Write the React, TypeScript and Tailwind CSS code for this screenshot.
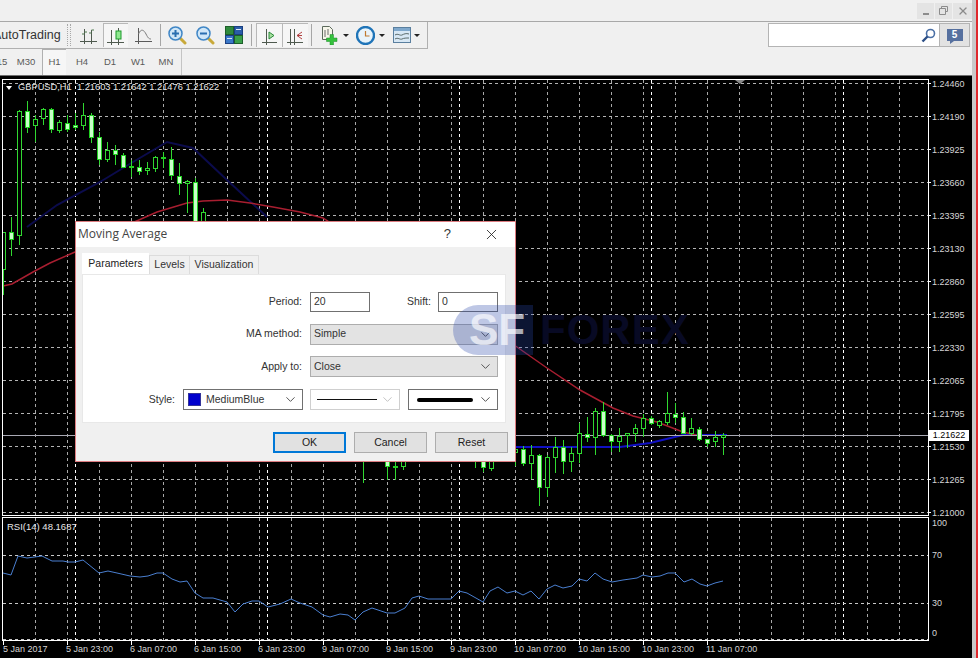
import { ChevronDown, X } from 'lucide-react'
import type { ReactNode } from 'react'

type Candle = [number, number, number, number, number, boolean]

// x, high, low, body top, body bottom, filled
const candles: Candle[] = [
  [3, 232, 295, 232, 269, false],
  [11, 217, 256, 232, 239, true],
  [19, 110, 245, 111, 235, false],
  [27, 101, 133, 111, 127, true],
  [35, 115, 142, 119, 125, false],
  [43, 108, 125, 109, 118, false],
  [51, 108, 133, 109, 129, true],
  [59, 120, 133, 122, 130, false],
  [67, 115, 132, 123, 129, true],
  [75, 113, 130, 125, 127, true],
  [83, 103, 130, 115, 125, false],
  [91, 113, 143, 115, 137, true],
  [99, 132, 165, 137, 159, true],
  [107, 142, 162, 150, 159, false],
  [115, 145, 165, 150, 154, true],
  [123, 153, 168, 155, 167, true],
  [131, 160, 177, 166, 167, true],
  [139, 160, 175, 167, 171, true],
  [147, 162, 175, 168, 170, false],
  [155, 156, 172, 157, 168, false],
  [163, 152, 168, 157, 158, true],
  [171, 147, 180, 159, 175, true],
  [179, 163, 195, 176, 183, true],
  [187, 180, 213, 181, 183, false],
  [195, 178, 224, 182, 224, true],
  [203, 208, 224, 212, 224, false],
  [363, 455, 483, 455, 458, false],
  [387, 455, 480, 458, 466, true],
  [395, 455, 480, 466, 467, true],
  [403, 455, 470, 458, 466, false],
  [475, 455, 468, 458, 460, false],
  [483, 455, 472, 458, 467, true],
  [491, 455, 471, 458, 468, false],
  [515, 446, 466, 449, 452, false],
  [523, 446, 466, 449, 463, true],
  [531, 445, 479, 455, 463, false],
  [539, 454, 506, 455, 487, true],
  [547, 455, 497, 457, 487, false],
  [555, 437, 473, 447, 457, false],
  [563, 440, 474, 447, 461, true],
  [571, 447, 472, 453, 461, false],
  [579, 423, 463, 433, 453, false],
  [587, 417, 442, 434, 437, true],
  [595, 408, 455, 411, 437, false],
  [603, 402, 437, 411, 435, true],
  [611, 434, 452, 435, 441, true],
  [619, 428, 452, 436, 441, false],
  [627, 433, 448, 433, 435, false],
  [635, 424, 442, 428, 433, false],
  [643, 414, 437, 418, 428, false],
  [651, 416, 425, 418, 423, true],
  [659, 420, 428, 421, 425, false],
  [667, 392, 425, 413, 422, false],
  [675, 403, 423, 414, 417, true],
  [683, 412, 434, 417, 433, true],
  [691, 418, 435, 428, 433, false],
  [699, 427, 441, 429, 439, true],
  [707, 439, 447, 439, 443, true],
  [715, 431, 447, 437, 441, false],
  [723, 433, 455, 435, 437, false],
]

const redLine =
  '3,286 12,284 33,272 50,263 75,252 132,223 157,212 187,203 203,201 227,200 250,203 273,207 300,212 323,218 517,347 547,368 580,390 613,408 633,416 657,422 683,432 700,436'
const blueDim = '27,227 57,205 100,182 133,162 167,142 193,148 227,180 267,217'
const blueBright = '515,447 567,447 620,447 650,443 683,435 727,435'
const rsiLine =
  '3,573 11,575 18,556 27,558 42,556 52,561 63,561 68,562 75,562 83,560 99,573 108,571 117,573 130,576 140,577 148,576 157,573 163,573 172,579 180,582 187,581 195,593 203,598 213,598 227,602 235,612 243,604 252,601 259,601 268,607 280,604 291,599 300,603 312,607 323,615 330,617 340,614 348,615 355,620 363,612 372,608 387,613 395,613 405,608 412,598 419,596 428,599 451,599 459,591 467,593 483,602 490,591 498,587 507,593 515,591 523,595 531,591 539,599 547,589 555,585 563,588 572,586 579,579 587,581 595,573 603,579 612,582 623,580 637,578 643,575 652,577 660,576 668,573 675,573 684,582 692,579 700,584 707,586 715,583 723,581'

const gridX = Array.from({ length: 28 }, (_, i) => 35 + i * 32)
const sepX = [75, 267, 459, 651, 843]
const priceY = Array.from({ length: 14 }, (_, i) => 83 + i * 33)
const prices = ['1.24460', '1.24190', '1.23925', '1.23660', '1.23395', '1.23130', '1.22860', '1.22595', '1.22330', '1.22065', '1.21795', '1.21530', '1.21265', '1.21000']
const dates = ['5 Jan 2017', '5 Jan 23:00', '6 Jan 07:00', '6 Jan 15:00', '6 Jan 23:00', '9 Jan 07:00', '9 Jan 15:00', '9 Jan 23:00', '10 Jan 07:00', '10 Jan 15:00', '10 Jan 23:00', '11 Jan 07:00']

const VGrid = ({ y1, y2 }: { y1: number; y2: number }) => (
  <>
    {gridX.map((x) => (
      <line key={x} x1={x + 0.5} x2={x + 0.5} y1={y1} y2={y2} stroke="#a8a8a8" strokeDasharray="3 3" />
    ))}
    {sepX.map((x) => (
      <line key={x} x1={x + 0.5} x2={x + 0.5} y1={y1} y2={y2} stroke="#ffffff" strokeDasharray="3 3" />
    ))}
  </>
)

const MainChart = () => (
  <svg width={930} height={437} viewBox="2 79 930 437" className="block shrink-0">
    <VGrid y1={80} y2={515} />
    {priceY.map((y) => (
      <g key={y}>
        <line x1={3} x2={928} y1={y + 0.5} y2={y + 0.5} stroke="#b4b4b4" strokeDasharray="3 3" />
        <line x1={928} x2={931} y1={y + 0.5} y2={y + 0.5} stroke="#ffffff" />
      </g>
    ))}
    <polyline points={blueDim} fill="none" stroke="#0b0b4c" strokeWidth={2} />
    <polyline points={blueBright} fill="none" stroke="#1010c4" strokeWidth={2} />
    <polyline points={redLine} fill="none" stroke="#a81e30" strokeWidth={1.5} />
    <line x1={3} x2={928} y1={435.5} y2={435.5} stroke="#a9a9b4" />
    {candles.map(([x, high, low, top, bottom, filled]) => (
      <g key={x}>
        <line x1={x + 0.5} x2={x + 0.5} y1={high} y2={low} stroke="#30d830" />
        <rect
          x={x - 1.5}
          y={top + 0.5}
          width={4}
          height={bottom - top}
          fill={filled ? '#c8ffc8' : '#000000'}
          stroke={filled ? '#20d020' : '#30d830'}
        />
      </g>
    ))}
    <path d="M735 80h10l-5 4z" fill="#8a8a8a" />
    <rect x={2.5} y={79.5} width={926} height={436} fill="none" stroke="#ffffff" />
  </svg>
)

const RsiChart = () => (
  <svg width={930} height={128} viewBox="2 517 930 128" className="block shrink-0">
    <VGrid y1={518} y2={640} />
    {[555, 603, 639].map((y) => (
      <line key={y} x1={3} x2={928} y1={y + 0.5} y2={y + 0.5} stroke="#c8c8c8" strokeDasharray="3 3" />
    ))}
    <polyline points={rsiLine} fill="none" stroke="#4a7fd0" />
    <rect x={2.5} y={517.5} width={926} height={123} fill="none" stroke="#ffffff" />
    {Array.from({ length: 12 }, (_, i) => 3 + i * 64).map((x) => (
      <line key={x} x1={x + 0.5} x2={x + 0.5} y1={641} y2={645} stroke="#ffffff" />
    ))}
  </svg>
)

const Axes = () => (
  <>
    <path d="M0 15.5H17M4.5 3V18M11.5 4V18" stroke="#4f5a4f" strokeWidth={1} fill="none" />
  </>
)

const IconBars = () => (
  <svg width={18} height={18} viewBox="0 0 18 18">
    <Axes />
    <path d="M2 8h2.5M4.5 6H7M9 7h2.5M11.5 4H14" stroke="#4d7a4d" fill="none" />
  </svg>
)

const IconCandle = () => (
  <svg width={18} height={18} viewBox="0 0 18 18">
    <path d="M0 15.5H17M4.5 3V18M11.5 1V18" stroke="#4f5a4f" fill="none" />
    <rect x={9} y={4} width={5} height={8} fill="#8fe88f" stroke="#1a9a2a" />
  </svg>
)

const IconLine = () => (
  <svg width={18} height={18} viewBox="0 0 18 18">
    <path d="M0 15.5H17M3.5 2V18" stroke="#5a5a5a" fill="none" />
    <path d="M3.5 8C6 2 9 4 11 8s3 5 5 5" stroke="#7a7a7a" fill="none" />
  </svg>
)

const IconZoom = ({ plus }: { plus?: boolean }) => (
  <svg width={19} height={19} viewBox="0 0 19 19">
    <path d="M11.5 11.5l5.5 5.5" stroke="#c8a93a" strokeWidth={3} strokeLinecap="round" />
    <circle cx={7.5} cy={7.5} r={6.5} fill="#cfe6f7" stroke="#3f86c6" strokeWidth={1.5} />
    <path d={plus ? 'M4 7.5h7M7.5 4v7' : 'M4 7.5h7'} stroke="#2a6fb0" strokeWidth={2} />
  </svg>
)

const IconTile = () => (
  <svg width={18} height={18} viewBox="0 0 18 18">
    <rect x={0.5} y={0.5} width={8} height={8} fill="#2f8a3c" stroke="#1d5f2a" />
    <rect x={9.5} y={0.5} width={8} height={8} fill="#2a5da8" stroke="#1a3f80" />
    <rect x={0.5} y={9.5} width={8} height={8} fill="#3a78c8" stroke="#1a3f80" />
    <rect x={9.5} y={9.5} width={8} height={8} fill="#3aa04a" stroke="#1d5f2a" />
    <path d="M11 3.5h5M2 12.5h5" stroke="#dfe8f5" />
  </svg>
)

const IconShift = () => (
  <svg width={18} height={18} viewBox="0 0 18 18">
    <path d="M1 15.5H16M5.5 2V18" stroke="#4f5a4f" fill="none" />
    <path d="M8 5l5 3.5L8 12z" fill="#a8e0a0" stroke="#2a8a3a" />
  </svg>
)

const IconAutoScroll = () => (
  <svg width={18} height={18} viewBox="0 0 18 18">
    <path d="M0 15.5H16M3.5 2V18M7.5 2V18" stroke="#4f5a4f" fill="none" />
    <path d="M15 5l-5 3.5 5 3.5M10 8.5h5" stroke="#b04040" fill="none" />
  </svg>
)

const IconNewChart = () => (
  <svg width={20} height={20} viewBox="0 0 20 20">
    <path d="M2.5 1.5h7l3 3v10h-10z" fill="#f6f6ea" stroke="#5c6a5c" />
    <path d="M5 5v7M8 4v6" stroke="#6a6a6a" />
    <path d="M10 9.5h3.5v3.5H17V16.5h-3.5V20H10v-3.5H6.5V13H10z" fill="#34c23c" stroke="#1d8a28" strokeWidth={0.5} />
  </svg>
)

const IconClock = () => (
  <svg width={19} height={19} viewBox="0 0 19 19">
    <circle cx={9.5} cy={9.5} r={8.5} fill="#e8f4fb" stroke="#1f74b8" strokeWidth={2.4} />
    <path d="M9.5 5v5h4" stroke="#c07a30" fill="none" strokeWidth={1.2} />
  </svg>
)

const IconTemplate = () => (
  <svg width={18} height={16} viewBox="0 0 18 16">
    <rect x={0.5} y={0.5} width={17} height={15} fill="#d7e7f4" stroke="#5a7f9f" />
    <rect x={1} y={1} width={16} height={3} fill="#7fa8cc" />
    <path d="M2 8c3-2 5 1 7 0s4-2 7-1M2 12c3-2 5 1 7 0s4-1 7-1" stroke="#5a6a6a" fill="none" />
  </svg>
)

const Caret = () => <span className="w-0 h-0 border-x-[3px] border-x-transparent border-t-[3px] border-t-[#222222]" />

const Sep = ({ className }: { className?: string }) => <div className={`w-px h-[22px] bg-[#a6a6a6] shrink-0 ${className ?? ''}`} />

const Tool = ({ w, pressed, children }: { w: string; pressed?: boolean; children: ReactNode }) => (
  <div
    className={`${w} h-[24px] shrink-0 flex items-center justify-center ${
      pressed ? 'border-t border-l border-[#b8b8b8] bg-[#f6f6f6]' : ''
    }`}
  >
    {children}
  </div>
)

const Select = ({ w, disabled, gray, children }: { w: string; disabled?: boolean; gray?: boolean; children: ReactNode }) => (
  <div
    className={`${w} h-[21px] shrink-0 flex items-center pr-[4px] border ${
      gray ? 'bg-[#e3e3e3] border-[#adadad]' : disabled ? 'bg-white border-[#cfcfcf]' : 'bg-white border-[#707070]'
    }`}
  >
    <div className="flex-1 min-w-0 flex items-center">{children}</div>
    <ChevronDown size={15} strokeWidth={1.6} className={disabled ? 'text-[#c4c4c4]' : 'text-[#555555]'} />
  </div>
)

const Button = ({ w, primary, children }: { w: string; primary?: boolean; children: ReactNode }) => (
  <div
    className={`${w} h-[21px] flex items-center justify-center text-[#222222] bg-[#e1e1e1] ${
      primary ? 'border-2 border-[#0078d7]' : 'border border-[#adadad]'
    }`}
  >
    {children}
  </div>
)

const Dialog = () => (
  <div className="absolute left-[75px] top-[221px] w-[441px] h-[241px] border border-[#dd7c80] bg-[#f0f0f0] flex flex-col font-['Liberation_Sans',sans-serif] text-[10.5px] text-[#333333]">
    <div className="h-[25px] bg-white flex items-center pl-[2px] pb-px shrink-0">
      <span className="font-['Open_Sans',sans-serif] text-[12px] text-[#444444] flex-1">Moving Average</span>
      <span className="text-[13px] text-[#333333] mr-[32px]">?</span>
      <X size={17} strokeWidth={1.2} className="mr-[15px] text-[#222222]" />
    </div>
    <div className="flex items-end h-[27px] pl-[6px] shrink-0">
      <div className="w-[67px] h-[21px] bg-white flex items-center justify-center text-[#222222]">Parameters</div>
      <div className="w-[41px] h-[19px] bg-[#f0f0f0] border border-b-0 border-[#dcdcdc] flex items-center justify-center">Levels</div>
      <div className="w-[69px] h-[19px] bg-[#f0f0f0] border border-b-0 border-l-0 border-[#dcdcdc] flex items-center justify-center">Visualization</div>
    </div>
    <div className="ml-[6px] w-[424px] h-[149px] bg-white border border-[#e8e8e8] pt-[16px] pr-[7px] flex flex-col gap-[11.7px] shrink-0">
      <div className="flex items-center justify-end h-[21px]">
        <span className="mr-[8px]">Period:</span>
        <div className="w-[60px] h-[20px] border border-[#707070] px-[3px] flex items-center">20</div>
        <span className="w-[31px] ml-[37px] shrink-0">Shift:</span>
        <div className="w-[60px] h-[20px] border border-[#707070] px-[3px] flex items-center">0</div>
      </div>
      <div className="flex items-center justify-end h-[21px]">
        <span className="mr-[8px]">MA method:</span>
        <Select w="w-[188px]" gray>
          <span className="pl-[3px]">Simple</span>
        </Select>
      </div>
      <div className="flex items-center justify-end h-[21px]">
        <span className="mr-[8px]">Apply to:</span>
        <Select w="w-[188px]" gray>
          <span className="pl-[3px]">Close</span>
        </Select>
      </div>
      <div className="flex items-center justify-end h-[21px]">
        <span className="mr-[8px]">Style:</span>
        <Select w="w-[120px]">
          <span className="w-[13px] h-[13px] bg-[#0000cd] ml-[4px] mr-[5px] border border-[#333399]" />
          <span>MediumBlue</span>
        </Select>
        <div className="ml-[7px]">
          <Select w="w-[90px]" disabled>
            <span className="ml-[6px] w-[60px] h-px bg-[#111111]" />
          </Select>
        </div>
        <div className="ml-[8px]">
          <Select w="w-[90px]">
            <span className="ml-[8px] w-[56px] h-[4px] rounded-full bg-black" />
          </Select>
        </div>
      </div>
    </div>
    <div className="flex justify-end gap-[8px] pt-[9px] pr-[7px]">
      <Button w="w-[73px]" primary>OK</Button>
      <Button w="w-[73px]">Cancel</Button>
      <Button w="w-[73px]">Reset</Button>
    </div>
  </div>
)

const App = () => {
  return (
    <div className="relative w-[978px] h-[658px] overflow-hidden flex bg-[#f0f0f0] font-['Liberation_Sans',sans-serif]">
      <div className="w-[972px] shrink-0 flex flex-col">
        {/* window buttons */}
        <div className="h-[22px] shrink-0 border-b border-[#a8a8a8] flex items-center justify-end">
          <div className="w-[17px] h-[16px] bg-[#e4e4e4] flex items-end justify-center pb-[4px] mr-px">
            <span className="w-[6px] h-[2px] bg-[#8c8c8c]" />
          </div>
          <div className="w-[17px] h-[16px] bg-[#e4e4e4] flex items-center justify-center mr-px">
            <svg width={9} height={9} viewBox="0 0 9 9">
              <path d="M2.5 2.5V.5h6v5h-2M.5 2.5h6v6h-6z" fill="none" stroke="#8c8c8c" />
            </svg>
          </div>
          <div className="w-[19px] h-[16px] bg-[#e4e4e4] flex items-center justify-center">
            <X size={12} strokeWidth={2.6} className="text-[#8c8c8c]" />
          </div>
        </div>

        {/* main toolbar */}
        <div className="h-[27px] shrink-0 flex items-start">
          <div className="w-[428px] h-[27px] shrink-0 border-r border-b border-[#b0b0b0] flex items-center overflow-hidden">
            <span className="w-[73px] -ml-[7px] shrink-0 text-[12.5px] text-[#333333]">AutoTrading</span>
            <div className="w-[4px] h-[22px] ml-px shrink-0 border-x border-dotted border-[#a8a8a8]" />
            <div className="w-[5px] shrink-0" />
            <Tool w="w-[26px]"><IconBars /></Tool>
            <div className="w-px shrink-0" />
            <Tool w="w-[25px]" pressed><IconCandle /></Tool>
            <Tool w="w-[32px]"><IconLine /></Tool>
            <Sep />
            <Tool w="w-[33px]"><IconZoom plus /></Tool>
            <Tool w="w-[22px]"><IconZoom /></Tool>
            <Tool w="w-[35px]"><IconTile /></Tool>
            <Sep className="mr-[4px]" />
            <Tool w="w-[26px]" pressed><IconShift /></Tool>
            <Tool w="w-[26px]" pressed><IconAutoScroll /></Tool>
            <Sep className="ml-[3px]" />
            <div className="w-[37px] pl-[8px] shrink-0 flex items-center gap-[3px]"><IconNewChart /><Caret /></div>
            <div className="w-[37px] pl-[7px] shrink-0 flex items-center gap-[4px]"><IconClock /><Caret /></div>
            <div className="w-[37px] pl-[7px] shrink-0 flex items-center gap-[3px]"><IconTemplate /><Caret /></div>
          </div>
          <div className="flex-1" />
          <div className="w-[172px] h-[24px] mt-px bg-white border border-[#b4b4b4] flex items-center justify-end pr-[3px]">
            <svg width={15} height={15} viewBox="0 0 15 15">
              <circle cx={9.5} cy={5.5} r={4} fill="none" stroke="#4a6fa5" strokeWidth={1.6} />
              <path d="M6.5 8.5L1.5 13.5" stroke="#2c4f86" strokeWidth={2.4} />
            </svg>
          </div>
          <div className="w-[30px] h-[24px] mt-px mr-[2px] bg-[#e2e2e2] border border-l-0 border-[#b4b4b4] flex items-center justify-center">
            <div className="relative w-[16px] h-[12px] bg-[#56709f] flex items-center justify-center text-[10px] font-bold leading-none text-white">
              5
              <span className="absolute -bottom-[3px] left-[3px] w-0 h-0 border-r-[4px] border-r-transparent border-t-[3px] border-t-[#56709f]" />
            </div>
          </div>
        </div>

        {/* timeframes */}
        <div className="h-[26px] shrink-0 flex items-center text-[9.5px] text-[#5a5a5a]">
          <div className="w-[182px] h-full border-r border-[#c4c4c4] flex items-center overflow-hidden">
            <span className="-ml-[16px] w-[28px] text-center shrink-0">M15</span>
            {['M30', 'H1', 'H4', 'D1', 'W1', 'MN'].map((t) => (
              <span
                key={t}
                className={`h-full flex items-center justify-center shrink-0 ${
                  t === 'H1' ? 'w-[24px] mx-[2px] border-t border-l border-[#b0b0b0] bg-[#f6f6f6]' : 'w-[28px]'
                }`}
              >
                {t}
              </span>
            ))}
          </div>
        </div>

        {/* charts */}
        <div className="flex-1 min-h-0 bg-black border-t border-[#6e6e6e] pt-[3px] pl-[2px] flex flex-col text-[9px] text-[#d6d6d6] leading-none">
          <div className="flex shrink-0 h-[437px]">
            <MainChart />
            <div className="relative flex-1 flex flex-col gap-[22px]">
              {prices.map((p) => (
                <span key={p} className="h-[11px] shrink-0 flex items-center">{p}</span>
              ))}
              <span className="absolute left-[-3px] top-[351px] w-[40px] h-[11px] bg-white text-black flex items-center justify-center">1.21622</span>
            </div>
          </div>
          <div className="flex shrink-0 mt-px">
            <RsiChart />
            <div className="flex-1 flex flex-col pt-px">
              <span className="h-[11px] flex items-center">100</span>
              <span className="h-[11px] flex items-center mt-[21px]">70</span>
              <span className="h-[11px] flex items-center mt-[37px]">30</span>
              <span className="h-[11px] flex items-center mt-[19px]">0</span>
            </div>
          </div>
          <div className="flex ml-px -mt-px">
            {dates.map((d, i) => (
              <span key={d} className={`${i === 0 ? 'w-[63px]' : 'w-[64px]'} shrink-0 whitespace-nowrap h-[11px] flex items-center`}>{d}</span>
            ))}
          </div>
        </div>
      </div>

      <div className="w-[4px] shrink-0 bg-[#c9c9c9]" />
      <div className="w-[2px] shrink-0 bg-[#e0282c]" />

      {/* chart legends */}
      <div className="absolute left-[6px] top-[82px] flex items-center gap-[6px] text-[9.3px] leading-[11px] text-[#e8e8e8]">
        <span className="w-0 h-0 border-x-[3.5px] border-x-transparent border-t-[4px] border-t-white" />
        <span className="whitespace-pre">GBPUSD,H1  1.21603 1.21642 1.21476 1.21622</span>
      </div>
      <div className="absolute left-[7px] top-[521px] text-[9.5px] leading-[11px] text-[#e8e8e8]">RSI(14) 48.1687</div>

      <Dialog />

      {/* watermark */}
      <div className="absolute left-[453px] top-[305px] w-[80px] h-[50px] rounded-l-full bg-[#2846aa]/30 pl-[16px] flex items-center text-[44px] font-bold leading-none text-white/65">SF</div>
      <div className="absolute left-[540px] top-[305px] h-[50px] flex items-center text-[42px] font-bold leading-none tracking-[1px] text-[#080a24]">FOREX</div>
    </div>
  )
}

export default App
